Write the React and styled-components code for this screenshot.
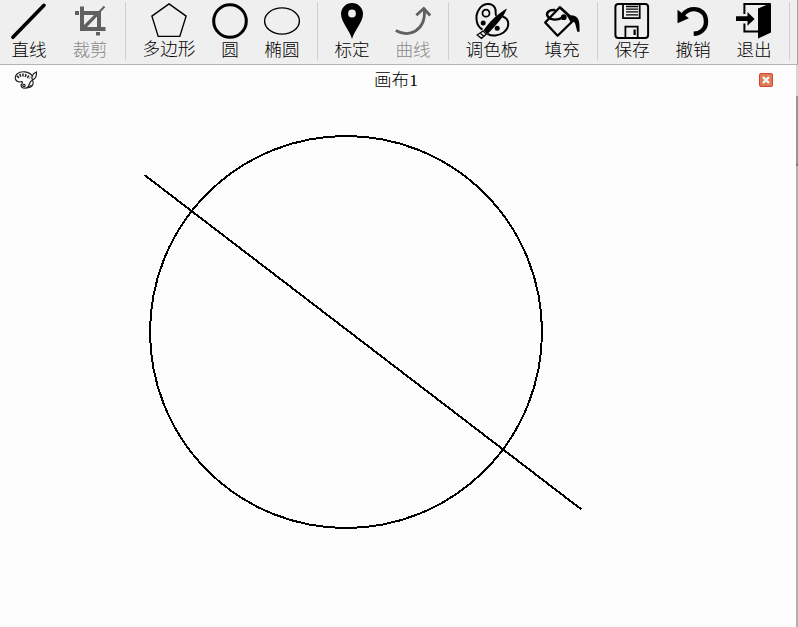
import React from "react";
import styled, { createGlobalStyle, css } from "styled-components";

const GlobalStyle = createGlobalStyle`
  * { box-sizing: border-box; }
  body {
    margin: 0;
    overflow: hidden;
    background: #fdfdfd;
    font-family: "Liberation Serif", "Noto Sans CJK SC", sans-serif;
  }
`;

const Window = styled.div`
  display: flex;
  flex-direction: column;
  width: 798px;
  height: 627px;
  overflow: hidden;
  background: #fdfdfd;
`;

const Toolbar = styled.header`
  display: flex;
  flex: none;
  height: 65px;
  background: #efefef;
  border-bottom: 1px solid #b4b4b4;
  border-right: 1px solid #a0a0a0;
  overflow: hidden;
`;

const Tools = styled.div`
  display: flex;
  flex: none;
  margin-left: -1.5px;
`;

const ToolButton = styled.button`
  display: flex;
  flex: none;
  flex-direction: column;
  align-items: center;
  width: ${(p) => p.$width}px;
  padding: 3px 0 0;
  border: 0;
  background: none;
  color: #000;
  ${(p) => p.disabled && css`color: #888;`}
`;

const Glyph = styled.svg`
  display: block;
  flex: none;
  width: 36px;
  height: 36px;
  overflow: visible;
  color: ${(p) => (p.$muted ? "#606060" : "#000")};
`;

const Label = styled.span`
  font-family: "Noto Sans CJK SC Light", "Noto Sans CJK SC", sans-serif;
  font-weight: 300;
  font-size: 17.6px;
  line-height: 20px;
  white-space: nowrap;
  ${(p) => p.$raised && css`margin-top: -1px;`}
`;

const Separator = styled.div`
  flex: none;
  width: 1px;
  height: 58px;
  margin: 2px 4px 0;
  background: #d0d0d0;
`;

const Body = styled.div`
  display: flex;
  flex: 1;
  min-height: 0;
`;

const Main = styled.main`
  display: flex;
  flex-direction: column;
  width: 796px;
`;

const TitleBar = styled.div`
  display: grid;
  grid-template-columns: 38px 1fr 40px;
  align-items: center;
  flex: none;
  height: 31px;
`;

const PaletteMark = styled.svg`
  width: 24px;
  height: 20px;
  margin: 0 0 2px 14px;
`;

const Title = styled.h1`
  margin: 0 2px 2px 0;
  text-align: center;
  font-family: "Liberation Serif", "Noto Sans CJK SC Light", "Noto Sans CJK SC", sans-serif;
  font-weight: 300;
  font-size: 17.6px;
  line-height: 26px;
`;

const CloseButton = styled.button`
  display: grid;
  place-items: center;
  width: 14px;
  height: 14px;
  padding: 0;
  margin: 0 0 1px 3px;
  border: 1px solid #d9402d;
  border-radius: 2px;
  background: #e07b58;
`;

const Drawing = styled.svg`
  flex: none;
  width: 796px;
  height: 531px;
`;

const Edge = styled.div`
  width: 2px;
  background: linear-gradient(
    #d5d5d5 0 31px,
    #969696 31px 99px,
    #777 99px 101px,
    #b0b0b0 101px
  );
`;

const stroke = { fill: "none", stroke: "currentColor" };

const icons = {
  line: <path d="M1.9 34.3 33 2.3" {...stroke} strokeWidth="3.6" strokeLinecap="round" />,
  crop: (
    <g transform="translate(3 0)">
      <path d="M0 8H4V12H0ZM5 3.5H9V8H26V24H30.5V28H5ZM9 12V22L19 12ZM22 13.5 12 24H22ZM21 29H25V32.5H21Z" fill="currentColor" fillRule="evenodd" />
      <path d="M10 24 29.5 3.5" {...stroke} strokeWidth="2" />
    </g>
  ),
  polygon: <path d="M18 .9 35.1 13.1 28.8 33.4H7.2L.9 13.1Z" {...stroke} strokeWidth="1.4" />,
  circle: <circle cx="18" cy="18" r="16.3" {...stroke} strokeWidth="3" />,
  ellipse: <ellipse cx="18" cy="18" rx="17.4" ry="13.1" {...stroke} strokeWidth="1.4" />,
  pin: (
    <path d="M18 36C16 28 7 19 7 11A11 11 0 0 1 29 11C29 19 20 28 18 36ZM18 6.6A3.9 3.9 0 1 0 18 14.4 3.9 3.9 0 1 0 18 6.6Z" fill="currentColor" fillRule="evenodd" />
  ),
  curve: (
    <>
      <path d="M.8 27.5C14 35 30.5 28 29.5 7" {...stroke} strokeWidth="2.8" />
      <path d="M21.3 12.3 28.8 5.5 35.2 12.5" {...stroke} strokeWidth="2.8" />
    </>
  ),
  palette: (
    <>
      <path d="M8.5 26.5C1.5 23 1 12.5 4.8 6.8 9-.5 18-.6 21 5 22.6 8.2 20.6 11.5 22.5 12.8M28.5 13.5C36 16 36 24.5 29.5 29.5 24.5 33 18 33.5 13.5 30.8" {...stroke} strokeWidth="2" />
      <circle cx="12" cy="10.2" r="3.5" {...stroke} strokeWidth="1.8" />
      <circle cx="9.2" cy="20" r="2.5" fill="currentColor" />
      <circle cx="23.2" cy="25.3" r="2.5" fill="currentColor" />
      <path d="M9.5 27.3C14 21 19 15.5 23.5 12 26.5 9.5 30 7 33 5.4 31.5 9 28.5 14.5 25 18.5 21.5 22.5 17 27.5 13.4 31Z" fill="currentColor" />
      <path d="M9 28 3.2 32 7.5 35.3 12.5 31ZM6.2 30 9.5 33" {...stroke} strokeWidth="1.3" />
    </>
  ),
  fill: (
    <>
      <path d="M27.7 19 13.6 32.7 1.2 19.5 15.8 4.3 26 14" {...stroke} strokeWidth="2.3" strokeLinejoin="round" />
      <path d="M10.5 7C5 6.5 1.2 10 4 13.7 8 18 15 17 19.2 14" {...stroke} strokeWidth="2.4" strokeLinecap="round" />
      <circle cx="19.8" cy="14.2" r="2.9" fill="currentColor" />
      <path d="M15.8 2.6 26.5 12.2C34.5 12.5 36 17 35.5 28.7H33.3C32 25 32 21 30 18.8L27.5 20.5 22.5 12Z" fill="currentColor" />
    </>
  ),
  save: (
    <>
      <rect x="1.4" y="1" width="32.7" height="34" rx="3" {...stroke} strokeWidth="2" />
      <path d="M9 1V15.2H25.7V1M11.4 35V23.6H23.7V35" {...stroke} strokeWidth="1.8" />
      <path d="M12 3.5H24M12 6.2H24M12 8.9H24M12 11.8H24" {...stroke} strokeWidth="1.3" />
      <path d="M19.5 26.5H21.7V32H19.5Z" fill="currentColor" />
    </>
  ),
  undo: (
    <>
      <path d="M7.5 12.7C13 2.8 31 3.5 31 18.8 31 26.5 25 30.5 18.7 30.7" {...stroke} strokeWidth="4.4" />
      <path d="M2.5 6.7 13.9 15.2 2.5 20.2Z" fill="currentColor" />
    </>
  ),
  exit: (
    <>
      <path d="M34.5 1H8.4V11M8.4 20.5V28.5H22" {...stroke} strokeWidth="2" />
      <path d="M22 5.5 35 .2V29.5L22 35.6Z M0 13.3H11.5V9L18.6 16 11.5 22.7V18.1H0Z" fill="currentColor" />
    </>
  ),
};

const groups = [
  [["直线", "line", 61], ["裁剪", "crop", 61, true]],
  [["多边形", "polygon", 79], ["圆", "circle", 43], ["椭圆", "ellipse", 61]],
  [["标定", "pin", 61], ["曲线", "curve", 61, true]],
  [["调色板", "palette", 79], ["填充", "fill", 61]],
  [["保存", "save", 61], ["撤销", "undo", 61], ["退出", "exit", 61]],
];

function Tool({ label, icon, width, disabled }) {
  return (
    <ToolButton $width={width} disabled={disabled}>
      <Glyph $muted={disabled} viewBox="0 0 36 36">{icons[icon]}</Glyph>
      <Label $raised={icon === "polygon"}>{label}</Label>
    </ToolButton>
  );
}

export default function App() {
  return (
    <>
      <GlobalStyle />
      <Window>
        <Toolbar>
          <Tools>
            {groups.map((group, index) => (
              <React.Fragment key={index}>
                {group.map(([label, icon, width, disabled]) => (
                  <Tool key={label} label={label} icon={icon} width={width} disabled={disabled} />
                ))}
                <Separator />
              </React.Fragment>
            ))}
          </Tools>
        </Toolbar>
        <Body>
          <Main>
            <TitleBar>
              <PaletteMark viewBox="0 0 24 20" fill="none" stroke="#222" strokeWidth="1.2">
                <path d="M6 12C1 12 0 7 3 4 7 .5 15 1 19 6.5M6 12C9 10.5 9 13 7 15 7 19 14 19.5 17.5 15" />
                <path d="M3.5 7.5C7 3.5 12 5 16 8" strokeWidth="3" strokeDasharray="1.5 1.2" />
                <path d="M22.5 2C18 4 17 7 18.5 10 22 8.5 22.7 5 22.5 2ZM18.5 10C14.5 12 16 15 13.5 17.5 18 18 20.5 14 18.5 10Z" />
                <circle cx="10" cy="15.5" r="1.2" />
              </PaletteMark>
              <Title>画布1</Title>
              <CloseButton aria-label="关闭">
                <svg width="8" height="8" viewBox="0 0 8 8">
                  <path d="M1 1 7 7M7 1 1 7" stroke="#fff" strokeWidth="2.2" />
                </svg>
              </CloseButton>
            </TitleBar>
            <Drawing viewBox="0 96 796 531" fill="none" stroke="#000" strokeWidth="2" shapeRendering="crispEdges">
              <circle cx="346" cy="332" r="196" />
              <path d="M144.5 175 581.5 509.5" />
            </Drawing>
          </Main>
          <Edge />
        </Body>
      </Window>
    </>
  );
}
